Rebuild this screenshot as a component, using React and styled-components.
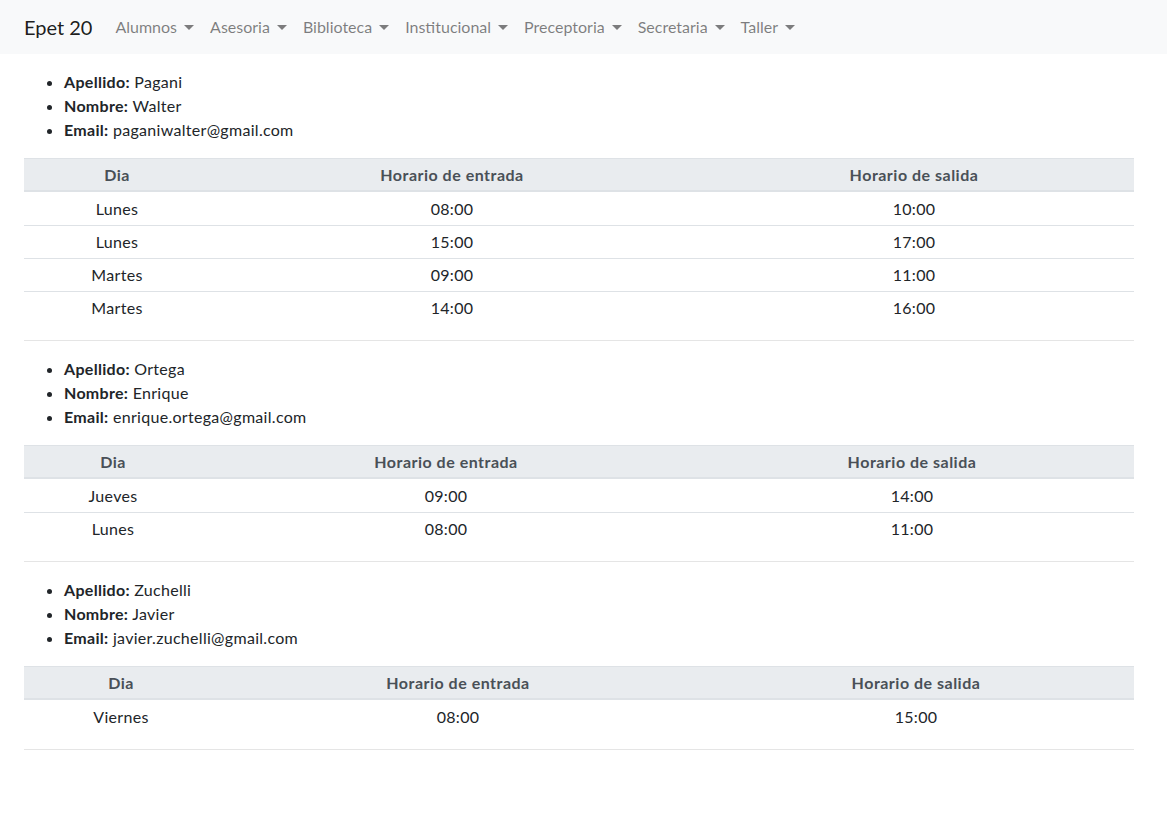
import React from 'react';
import styled, { createGlobalStyle } from 'styled-components';

const GlobalStyle = createGlobalStyle`
	html, body {
		margin: 0;
		padding: 0;
		background: #fff;
	}
	body {
		font-family: "Segoe UI", Lato, "Noto Sans", sans-serif;
		font-size: 16px;
		line-height: 24px;
		letter-spacing: 0.3px;
		color: #212529;
	}
`;

const Navbar = styled.nav`
	height: 54px;
	background: #f8f9fa;
	display: flex;
	align-items: center;
	padding: 0 24px;
	box-sizing: border-box;
	letter-spacing: 0;
`;

const Brand = styled.a`
	font-size: 20px;
	line-height: 30px;
	color: rgba(0, 0, 0, 0.9);
	margin-right: 15px;
	text-decoration: none;
`;

const NavList = styled.ul`
	display: flex;
	list-style: none;
	margin: 0;
	padding: 0;
`;

const NavLink = styled.a`
	display: flex;
	align-items: center;
	padding: 8px;
	color: rgba(0, 0, 0, 0.5);
	text-decoration: none;

	&::after {
		content: '';
		display: inline-block;
		margin-left: 7px;
		border-top: 5px solid;
		border-left: 5px solid transparent;
		border-right: 5px solid transparent;
	}
`;

const Container = styled.main`
	width: 1110px;
	margin-left: 24px;
	padding-top: 16px;
`;

const InfoList = styled.ul`
	margin: 0 0 16px;
	padding-left: 40px;

	b {
		font-weight: 700;
	}
`;

const Table = styled.table`
	width: 100%;
	border-collapse: collapse;
	margin-bottom: 16px;
	table-layout: fixed;

	th, td {
		text-align: center;
		padding: 0 5px;
	}

	th {
		background: #e9ecef;
		color: #495057;
		font-weight: 700;
		letter-spacing: 0.5px;
		height: 31px;
		border-top: 1px solid #dee2e6;
		border-bottom: 2px solid #dee2e6;
	}

	td {
		height: 32px;
		border-top: 1px solid #dee2e6;
	}

	tbody tr:first-child td {
		border-top: none;
		height: 33px;
	}
`;

const Divider = styled.hr`
	border: 0;
	border-top: 1px solid rgba(0, 0, 0, 0.1);
	margin: 0 0 16px;
`;

const menus = ['Alumnos', 'Asesoria', 'Biblioteca', 'Institucional', 'Preceptoria', 'Secretaria', 'Taller'];

const docentes = [
	{
		apellido: 'Pagani',
		nombre: 'Walter',
		email: 'paganiwalter@gmail.com',
		cols: [186, 484, 440],
		horarios: [
			['Lunes', '08:00', '10:00'],
			['Lunes', '15:00', '17:00'],
			['Martes', '09:00', '11:00'],
			['Martes', '14:00', '16:00'],
		],
	},
	{
		apellido: 'Ortega',
		nombre: 'Enrique',
		email: 'enrique.ortega@gmail.com',
		cols: [178, 488, 444],
		horarios: [
			['Jueves', '09:00', '14:00'],
			['Lunes', '08:00', '11:00'],
		],
	},
	{
		apellido: 'Zuchelli',
		nombre: 'Javier',
		email: 'javier.zuchelli@gmail.com',
		cols: [194, 480, 436],
		horarios: [
			['Viernes', '08:00', '15:00'],
		],
	},
];

const Horarios = ({ cols, rows }) => (
	<Table>
		<colgroup>
			{cols.map((w, i) => <col key={i} style={{ width: w }} />)}
		</colgroup>
		<thead>
			<tr>
				<th>Dia</th>
				<th>Horario de entrada</th>
				<th>Horario de salida</th>
			</tr>
		</thead>
		<tbody>
			{rows.map((r, i) => (
				<tr key={i}>
					{r.map((c, j) => <td key={j}>{c}</td>)}
				</tr>
			))}
		</tbody>
	</Table>
);

export default function App() {
	return (
		<>
			<GlobalStyle />
			<Navbar>
				<Brand href="#">Epet 20</Brand>
				<NavList>
					{menus.map(m => (
						<li key={m}><NavLink href="#">{m}</NavLink></li>
					))}
				</NavList>
			</Navbar>
			<Container>
				{docentes.map(d => (
					<section key={d.email}>
						<InfoList>
							<li><b>Apellido:</b> {d.apellido}</li>
							<li><b>Nombre:</b> {d.nombre}</li>
							<li><b>Email:</b> {d.email}</li>
						</InfoList>
						<Horarios cols={d.cols} rows={d.horarios} />
						<Divider />
					</section>
				))}
			</Container>
		</>
	);
}
